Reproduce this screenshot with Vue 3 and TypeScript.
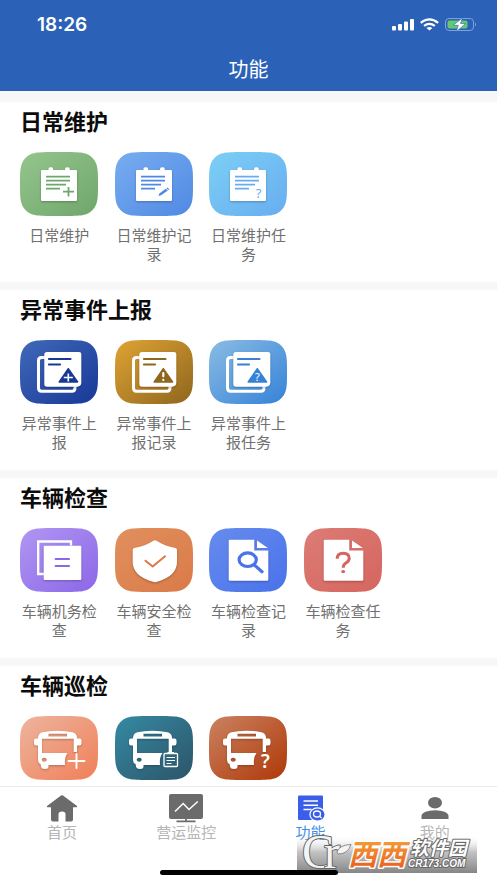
<script setup lang="ts">
import { ref } from 'vue'

type Glyph = 'notepad' | 'event' | 'pages' | 'shield' | 'document' | 'bus'
type Mark = 'plus' | 'pencil' | 'question' | 'alert' | 'search' | 'clipboard' | 'none'

interface Tile {
  id: string
  name: string
  glyph: Glyph
  mark: Mark
  from: string
  to: string
}

interface Section {
  title: string
  captions: boolean
  tiles: Tile[]
}

const sections: Section[] = [
  {
    title: '日常维护',
    captions: true,
    tiles: [
      { id: 'care', name: '日常维护', glyph: 'notepad', mark: 'plus', from: '#94c58d', to: '#6fa66b' },
      { id: 'care-log', name: '日常维护记录', glyph: 'notepad', mark: 'pencil', from: '#78adf0', to: '#5089e4' },
      { id: 'care-task', name: '日常维护任务', glyph: 'notepad', mark: 'question', from: '#7ccff5', to: '#68adf0' },
    ],
  },
  {
    title: '异常事件上报',
    captions: true,
    tiles: [
      { id: 'event', name: '异常事件上报', glyph: 'event', mark: 'plus', from: '#4069b8', to: '#183898' },
      { id: 'event-log', name: '异常事件上报记录', glyph: 'event', mark: 'alert', from: '#dfa333', to: '#8f661e' },
      { id: 'event-task', name: '异常事件上报任务', glyph: 'event', mark: 'question', from: '#8abce4', to: '#3582d8' },
    ],
  },
  {
    title: '车辆检查',
    captions: true,
    tiles: [
      { id: 'check-work', name: '车辆机务检查', glyph: 'pages', mark: 'none', from: '#b096f2', to: '#8c67e8' },
      { id: 'check-safe', name: '车辆安全检查', glyph: 'shield', mark: 'none', from: '#e1905e', to: '#d97a48' },
      { id: 'check-log', name: '车辆检查记录', glyph: 'document', mark: 'search', from: '#668cee', to: '#4a72ea' },
      { id: 'check-task', name: '车辆检查任务', glyph: 'document', mark: 'question', from: '#dc7c75', to: '#d6655f' },
    ],
  },
  {
    title: '车辆巡检',
    captions: false,
    tiles: [
      { id: 'patrol', name: '车辆巡检', glyph: 'bus', mark: 'plus', from: '#edb59e', to: '#f07f58' },
      { id: 'patrol-log', name: '车辆巡检记录', glyph: 'bus', mark: 'clipboard', from: '#358aa4', to: '#2c5468' },
      { id: 'patrol-task', name: '车辆巡检任务', glyph: 'bus', mark: 'question', from: '#cb8261', to: '#ae3808' },
    ],
  },
]

const tabs = [
  { id: 'home', name: '首页' },
  { id: 'monitor', name: '营运监控' },
  { id: 'features', name: '功能' },
  { id: 'mine', name: '我的' },
]

const activeTab = ref('features')
</script>

<template>
  <div class="screen">
    <header class="header">
      <div class="status">
        <span class="time">18:26</span>
        <svg class="status-icons" width="86" height="18" viewBox="0 0 86 18" aria-hidden="true">
          <g fill="#fff">
            <rect x="1" y="10" width="4" height="4.500" rx="1" />
            <rect x="7" y="8" width="4" height="6.500" rx="1" />
            <rect x="13" y="5.500" width="4" height="9" rx="1" />
            <rect x="19" y="3" width="4" height="11.500" rx="1" />
          </g>
          <g fill="none" stroke="#fff" stroke-width="2.100">
            <path d="M29.700 6.900Q38.400-.1 47.100 6.900" />
            <path d="M33 9.900q5.400-4.200 10.800 0" />
          </g>
          <path fill="#fff" d="M35.400 11.900q3-2 6 0l-3 2.700z" />
          <rect x="54.500" y="2.500" width="28" height="12" rx="3.500" fill="none" stroke="#7da1d8" />
          <rect x="56.500" y="4.500" width="20" height="8" rx="2" fill="#63c971" />
          <path fill="#8cabda" d="M84 6.500q2 2 0 4z" />
          <path fill="#fff" stroke="#2b62b8" stroke-width=".6" d="M71.500 1.800l-9.200 7.500h5l-2 6.400 9.400-8.200h-5.200z" />
        </svg>
      </div>
      <h1 class="page-title">功能</h1>
    </header>

    <main class="content">
      <section v-for="section in sections" :key="section.title" class="section">
        <h2 class="section-title">{{ section.title }}</h2>
        <div class="tiles">
          <button v-for="tile in section.tiles" :key="tile.id" type="button" class="tile" :aria-label="tile.name">
            <svg class="tile-icon" width="78" height="64" viewBox="0 0 78 64" aria-hidden="true">
              <defs>
                <linearGradient :id="`bg-${tile.id}`" x1="0" y1="0" x2="1" y2="1">
                  <stop offset="0" :stop-color="tile.from" />
                  <stop offset="1" :stop-color="tile.to" />
                </linearGradient>
              </defs>
              <path
                :fill="`url(#bg-${tile.id})`"
                d="M0 32C0 17 .3 12 5 6.500C10 1 15 0 32 0H46C63 0 68 1 73 6.500C77.700 12 78 17 78 32C78 47 77.700 52 73 57.500C68 63 63 64 46 64H32C15 64 10 63 5 57.500C.3 52 0 47 0 32Z"
              />

              <g v-if="tile.glyph === 'notepad'">
                <path class="shape" d="M22 18h6.500v-1.500q0-1.200 2.300-1.200t2.300 1.200V18h12v-1.500q0-1.200 2.300-1.200t2.300 1.200V18H56q1 0 1 1v29q0 1-1 1H22q-1 0-1-1V19q0-1 1-1z" />
                <g fill="none" :stroke="tile.to" stroke-width="1.800">
                  <path d="M26 24.700h24M26 28.700h24M26 32.700h20M26 36.700h14" />
                  <path v-if="tile.mark === 'plus'" d="M43 39.700h11M48.500 35v9.500" />
                </g>
                <path v-if="tile.mark === 'pencil'" :fill="tile.to" d="M43.500 44l.8-2.500 6.500-4.700 2 1.600-6.700 4.800zM51.400 36.400l1-.8 2 1.600-1 .8z" />
                <text v-if="tile.mark === 'question'" x="49.500" y="45.500" class="mark" font-size="13" :fill="tile.to">?</text>
              </g>

              <g v-else-if="tile.glyph === 'event'">
                <path fill="none" stroke="#fff" stroke-width="3" d="M25 17.500h-3.500q-3 0-3 3v27.500q0 3.200 3 3.200H52q3 0 3-3.500v-2" />
                <path class="shape" d="M27 12h32q2.300 0 2.300 2.300v28.200q0 3.700-4 4.200H27q-2.700 0-2.700-2.700V14.500q0-2.500 2.700-2.500z" />
                <path fill="none" :stroke="tile.to" stroke-width="2.200" stroke-linecap="round" d="M29 19h21.500M29 24.500h11" />
                <path :fill="tile.to" :stroke="tile.to" stroke-width="1.500" stroke-linejoin="round" d="M48.300 28.700l9.300 13.200H39.200z" />
                <path v-if="tile.mark === 'plus'" fill="none" stroke="#fff" stroke-width="1.600" d="M43.800 37.500h9M48.300 33.500v8" />
                <path v-if="tile.mark === 'alert'" fill="none" stroke="#fff" stroke-width="2.200" stroke-linecap="round" d="M48.300 33v3.300M48.300 39.900v.2" />
                <text v-if="tile.mark === 'question'" x="48.300" y="41.300" class="mark" font-size="11" fill="#fff">?</text>
              </g>

              <g v-else-if="tile.glyph === 'pages'">
                <path fill="none" stroke="#fff" stroke-width="2.300" d="M51 17.500v-4H18.200V46H24" />
                <rect class="shape" x="23.700" y="17.700" width="37.600" height="34.300" rx="1" />
                <path fill="none" :stroke="tile.to" stroke-width="2.200" stroke-linecap="round" d="M35.700 31h13.300M35.700 38h13.300" />
              </g>

              <g v-else-if="tile.glyph === 'shield'">
                <path class="shape" d="M40 12.300q1 0 2 .6 7 4.700 18.500 7.200 1.500.4 1.500 1.700V34q0 14-20 19.800-2 .7-4 0Q17.700 48 17.700 34V21.800q0-1.300 1.500-1.700Q31 17.600 38 12.900q1-.6 2-.6z" />
                <path fill="none" :stroke="tile.to" stroke-width="2" stroke-linecap="round" stroke-linejoin="round" d="M30.500 32.700l7.200 5.800L50 28.300" />
              </g>

              <g v-else-if="tile.glyph === 'document'">
                <path class="shape" d="M21 11.700h24.300v10.800h14V51.500q0 1.200-1.200 1.200H21q-1.300 0-1.300-1.200V13q0-1.300 1.300-1.300z" />
                <path fill="#fff" d="M48 12.500v7.500h10.800z" />
                <g v-if="tile.mark === 'search'" fill="none" :stroke="tile.to" stroke-width="3.200">
                  <ellipse cx="38.700" cy="31.700" rx="8.600" ry="6.800" />
                  <path stroke-linecap="round" d="M45 36.700l8 7" />
                </g>
                <g v-if="tile.mark === 'question'" fill="none" :stroke="tile.to" stroke-width="3">
                  <path d="M33.200 30.700q0-5.500 6-5.500t6 5q0 2.800-3 4.500t-3 5" />
                  <ellipse cx="39.200" cy="43.600" rx="2" ry="1.700" :fill="tile.to" stroke="none" />
                </g>
              </g>

              <g v-else>
                <path
                  class="shape"
                  fill-rule="evenodd"
                  d="M18 22q0-4.500 4.500-5.800Q29 14.700 37.500 14.700t15 1.500Q57 17.500 57 22v.5h2.500q2 0 2 2v3q0 2-2 2H57V36h-3.300V22.700H22V37h25.500q-3.500 4.500-2.500 12H28.500v1.500q0 2.500-3.500 2.500t-4-2.500l-.5-2.500q-2.500-1-2.500-4V29.500h-2q-2 0-2-2v-3q0-2 2-2h2zM28.500 17.700v2.700h18.500v-2.700zM24.200 41.700a2.500 2 0 1 0 .01 0z"
                />
                <path v-if="tile.mark === 'plus'" fill="none" stroke="#fff" stroke-width="1.900" stroke-linecap="round" d="M48.500 45h16M56.500 38v14" />
                <g v-if="tile.mark === 'clipboard'" fill="none" stroke="#fff" stroke-width="1.300">
                  <rect x="49" y="37.500" width="13.500" height="13" rx="1" />
                  <path stroke-width="2" d="M52.500 37h6.500" />
                  <path stroke-width="1.200" d="M51.500 41.500h8.500M51.500 44.500h8.500M51.500 47.500h5" />
                </g>
                <text v-if="tile.mark === 'question'" x="56.500" y="52" class="mark bold" font-size="19" fill="#fff">?</text>
              </g>
            </svg>
            <span v-if="section.captions" class="caption">{{ tile.name }}</span>
          </button>
        </div>
      </section>
    </main>

    <nav class="tabbar">
      <button
        v-for="tab in tabs"
        :key="tab.id"
        type="button"
        class="tab"
        :class="{ active: tab.id === activeTab }"
        @click="activeTab = tab.id"
      >
        <svg class="tab-icon" width="36" height="30" viewBox="0 0 36 30" aria-hidden="true">
          <path
            v-if="tab.id === 'home'"
            fill="currentColor"
            d="M17 1.600q1-.8 2 0L33 12q.8 1-.5 1.200H29V25.500q0 2-2 2h-5.500V20q0-2.500-3.500-2.500T14.500 20v7.500H9q-2 0-2-2V13.200H3.500Q2.200 13 3 12z"
          />
          <g v-else-if="tab.id === 'monitor'">
            <rect x="1" y="0" width="34" height="25" rx="2" fill="currentColor" />
            <path fill="none" stroke="currentColor" stroke-width="1.700" d="M18 25v2.500M8.500 27.400h19" />
            <path fill="none" stroke="#fff" stroke-width="1.500" d="M7 17.500l8.200-8 5.800 6 8.800-8" />
          </g>
          <g v-else-if="tab.id === 'features'">
            <rect x="5" y="1.500" width="25" height="24.500" rx="1" fill="currentColor" />
            <path fill="none" stroke="#fff" stroke-width="1.500" d="M10.500 7h14.500M10.500 11.300h14.500M10.500 15.600h8" />
            <ellipse cx="24.500" cy="20.500" rx="7.600" ry="6.600" fill="currentColor" stroke="#fff" stroke-width="1.200" />
            <ellipse cx="24" cy="20" rx="3.500" ry="3" fill="none" stroke="#fff" stroke-width="1.300" />
            <path fill="none" stroke="#fff" stroke-width="1.300" d="M26.500 22.300l2 1.700" />
          </g>
          <g v-else fill="currentColor">
            <ellipse cx="18" cy="8.700" rx="7" ry="5.800" />
            <path d="M4.500 25v-3q0-2.500 4-4.200 4-1.600 9.500-1.600t9.500 1.600q4 1.700 4 4.200v3z" />
          </g>
        </svg>
        <span class="tab-name">{{ tab.name }}</span>
      </button>
    </nav>

    <svg class="badge" width="180" height="63" viewBox="0 -10 180 63" role="img" aria-label="西西软件园">
      <defs>
        <linearGradient id="badge-shade" x1="0" y1="0" x2="0" y2="1">
          <stop offset="0" stop-color="#fff" stop-opacity="0" />
          <stop offset=".45" stop-color="#bbb" stop-opacity=".9" />
          <stop offset="1" stop-color="#858585" />
        </linearGradient>
        <linearGradient id="badge-orange" x1="0" y1="0" x2="0" y2="1">
          <stop offset="0" stop-color="#f8b03c" />
          <stop offset="1" stop-color="#e8561c" />
        </linearGradient>
      </defs>
      <rect y="5" width="180" height="38" fill="url(#badge-shade)" />
      <g class="badge-serif">
        <text x="5" y="38">C</text>
        <text x="27" y="38">r</text>
      </g>
      <path fill="#f4f4f4" stroke="#666" stroke-width=".7" d="M40 22q2-7 14-7.500-3 9.500-13 9.500z" />
      <text class="badge-main" x="51" y="35">西西</text>
      <text class="badge-side" x="113" y="25">软件园</text>
      <text class="badge-url" x="111" y="37">CR173.COM</text>
    </svg>
    <div class="home-indicator"></div>
  </div>
</template>

<style>
body {
  margin: 0;
  background: #fff;
}
</style>

<style scoped>
.screen {
  position: relative;
  display: flex;
  flex-direction: column;
  height: 100vh;
  overflow: hidden;
  background: #fff;
  font-family: Roboto, 'Noto Sans CJK SC', sans-serif;
}

button {
  border: 0;
  padding: 0;
  background: none;
  font: inherit;
  cursor: pointer;
}

.header {
  flex: none;
  background: #2b62b8;
  color: #fff;
}

.status {
  display: flex;
  align-items: center;
  justify-content: space-between;
  height: 50px;
  padding: 0 20px 0 37px;
}

.time {
  font: 600 19px/50px Inter, sans-serif;
}

.page-title {
  margin: 0;
  font-size: 20px;
  font-weight: 400;
  line-height: 41px;
  text-align: center;
}

.content {
  flex: 1;
  min-height: 0;
  padding-top: 11px;
  overflow: hidden auto;
  scrollbar-width: none;
  background: #f7f7f7;
}

.section {
  padding-bottom: 17px;
  background: #fff;
}

.section + .section {
  margin-top: 8px;
}

.section-title {
  margin: 0 0 8px;
  padding: 0 20px;
  color: #0c0c0c;
  font-size: 22px;
  font-weight: 700;
  line-height: 42px;
}

.tiles {
  display: grid;
  grid-template-columns: repeat(5, 1fr);
  padding: 0 12px;
}

.tile {
  display: flex;
  flex-direction: column;
  align-items: center;
  gap: 11px;
}

.tile-icon {
  display: block;
}

.shape {
  fill: #fff;
  filter: drop-shadow(0 1px 1px rgb(0 0 0 / 25%));
}

.mark {
  font-family: 'Noto Sans', sans-serif;
  text-anchor: middle;
}

.mark.bold {
  font-weight: 600;
}

.caption {
  width: 78px;
  color: #707070;
  font-size: 15px;
  line-height: 19px;
  text-align: center;
}

.tabbar {
  display: flex;
  flex: none;
  height: 96px;
  border-top: 1px solid #ebebeb;
  background: #fff;
}

.tab {
  display: flex;
  flex: 1;
  flex-direction: column;
  align-items: center;
  padding-top: 7px;
  color: #6b6b6b;
}

.tab-icon {
  display: block;
}

.tab-name {
  color: #b5b5b5;
  font-size: 15px;
  line-height: 18px;
}

.tab.active {
  color: #3b5eea;
}

.tab.active .tab-name {
  color: #3f8fe6;
}

.badge {
  position: absolute;
  right: 20px;
  bottom: 0;
  pointer-events: none;
}

.badge text {
  paint-order: stroke;
  stroke-linejoin: round;
}

.badge-serif {
  fill: #f4f4f4;
  stroke: #666;
  stroke-width: 2px;
  font: 48px 'Liberation Serif', serif;
}

.badge-main {
  fill: url(#badge-orange);
  stroke: #fff;
  stroke-width: 3px;
  font: italic 700 29px 'Noto Sans CJK SC', sans-serif;
}

.badge-side {
  fill: #fff;
  stroke: #666;
  stroke-width: 2px;
  font: italic 700 19px 'Noto Sans CJK SC', sans-serif;
}

.badge-url {
  fill: #fff;
  stroke: #666;
  stroke-width: 2px;
  font: italic 700 10px 'Liberation Sans', sans-serif;
}

.home-indicator {
  position: absolute;
  bottom: 8px;
  left: 50%;
  width: 178px;
  height: 5px;
  margin-left: -89px;
  border-radius: 3px;
  background: #000;
}
</style>
